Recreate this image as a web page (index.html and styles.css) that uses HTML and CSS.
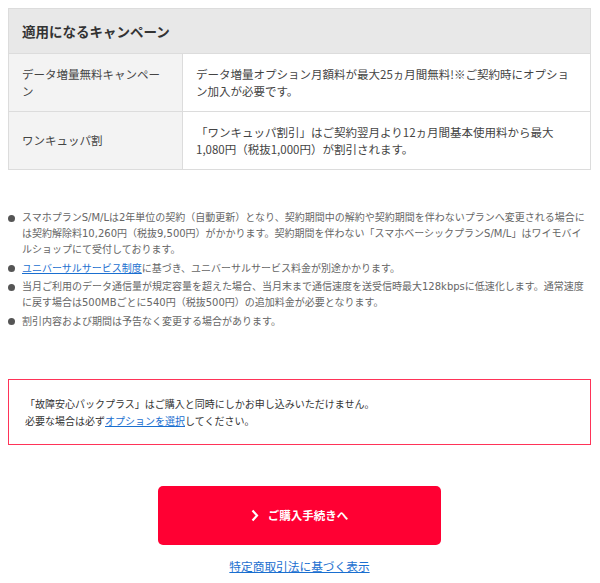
FILE: index.html
```html
<!DOCTYPE html>
<html lang="ja">
<head>
<meta charset="UTF-8">
<meta name="viewport" content="width=device-width, initial-scale=1.0">
<title>ご購入手続き</title>
<link rel="stylesheet" href="styles.css">
</head>
<body>

<div class="container">
    <table class="campaign">
        <tr>
            <th colspan="2">適用になるキャンペーン</th>
        </tr>
        <tr>
            <td class="name">データ増量無料キャンペーン</td>
            <td>データ増量オプション月額料が最大25ヵ月間無料!※ご契約時にオプション加入が必要です。</td>
        </tr>
        <tr>
            <td class="name">ワンキュッパ割</td>
            <td>「ワンキュッパ割引」はご契約翌月より12ヵ月間基本使用料から最大<span class="nowrap">1,080円</span>（税抜1,000円）が割引されます。</td>
        </tr>
    </table>

    <ul class="notes">
        <li>スマホプランS/M/Lは2年単位の契約（自動更新）となり、契約期間中の解約や契約期間を伴わないプランへ変更される場合には契約解除料10,260円（税抜9,500円）がかかります。契約期間を伴わない「スマホベーシックプランS/M/L」はワイモバイルショップにて受付しております。</li>
        <li><a href="#">ユニバーサルサービス制度</a>に基づき、ユニバーサルサービス料金が別途かかります。</li>
        <li>当月ご利用のデータ通信量が規定容量を超えた場合、当月末まで通信速度を送受信時最大128kbpsに低速化します。通常速度に戻す場合は500MBごとに540円（税抜500円）の追加料金が必要となります。</li>
        <li>割引内容および期間は予告なく変更する場合があります。</li>
    </ul>

    <div class="notice">
        <p>「故障安心パックプラス」はご購入と同時にしかお申し込みいただけません。</p>
        <p>必要な場合は必ず<a href="#">オプションを選択</a>してください。</p>
    </div>

    <div class="actions">
        <a href="#" class="btn-buy">
            <svg width="8" height="13" viewBox="0 0 8 13"><path d="M1.5 1.5 L6 6.5 L1.5 11.5" fill="none" stroke="#fff" stroke-width="2.2"/></svg>
            ご購入手続きへ
        </a>
        <a href="#" class="law-link">特定商取引法に基づく表示</a>
    </div>
</div>

</body>
</html>
```

FILE: styles.css
```css
body {
    font-family: "Noto Sans CJK JP", "Noto Sans", sans-serif;
    margin: 8px;
    color: #333;
    background-color: #fff;
}

.container {
    width: 583px;
}

a {
    color: #1a6fd0;
    text-decoration: underline;
}

.campaign {
    width: 100%;
    border-collapse: collapse;
    font-size: 11.5px;
    line-height: 16.5px;
}

.campaign th,
.campaign td {
    border: 1px solid #dcdcdc;
    text-align: left;
    vertical-align: middle;
}

.campaign th {
    background-color: #e8e8e8;
    font-size: 13.5px;
    font-weight: bold;
    height: 43px;
    padding: 1px 13px 0;
}

.campaign td {
    padding: 12px 13px;
    color: #444;
}

.campaign td.name {
    width: 147px;
    background-color: #f3f3f3;
}

.nowrap {
    white-space: nowrap;
}

.notes {
    list-style: none;
    margin: 40px 0 0;
    padding: 0;
    font-family: "DejaVu Sans", "Noto Sans CJK JP", sans-serif;
    font-size: 10px;
    line-height: 16px;
    color: #666;
}

.notes li {
    position: relative;
    padding-left: 14px;
}

.notes li + li {
    margin-top: 2.5px;
}

.notes li::before {
    content: "";
    position: absolute;
    left: 0;
    top: 4.5px;
    width: 7px;
    height: 7px;
    border-radius: 50%;
    background-color: #555;
}

.notice {
    margin-top: 49px;
    border: 1px solid #ff3358;
    padding: 15px 16px;
    font-size: 10px;
    line-height: 17px;
}

.notice p {
    margin: 0;
}

.actions {
    display: flex;
    flex-direction: column;
    align-items: center;
    margin-top: 41px;
}

.btn-buy {
    display: flex;
    align-items: center;
    justify-content: center;
    gap: 9px;
    width: 283px;
    height: 59px;
    background-color: #ff0033;
    border-radius: 5px;
    color: #fff;
    font-size: 11.5px;
    font-weight: bold;
    text-decoration: none;
}

.law-link {
    margin-top: 12px;
    font-size: 11.7px;
    line-height: 17px;
}
```
